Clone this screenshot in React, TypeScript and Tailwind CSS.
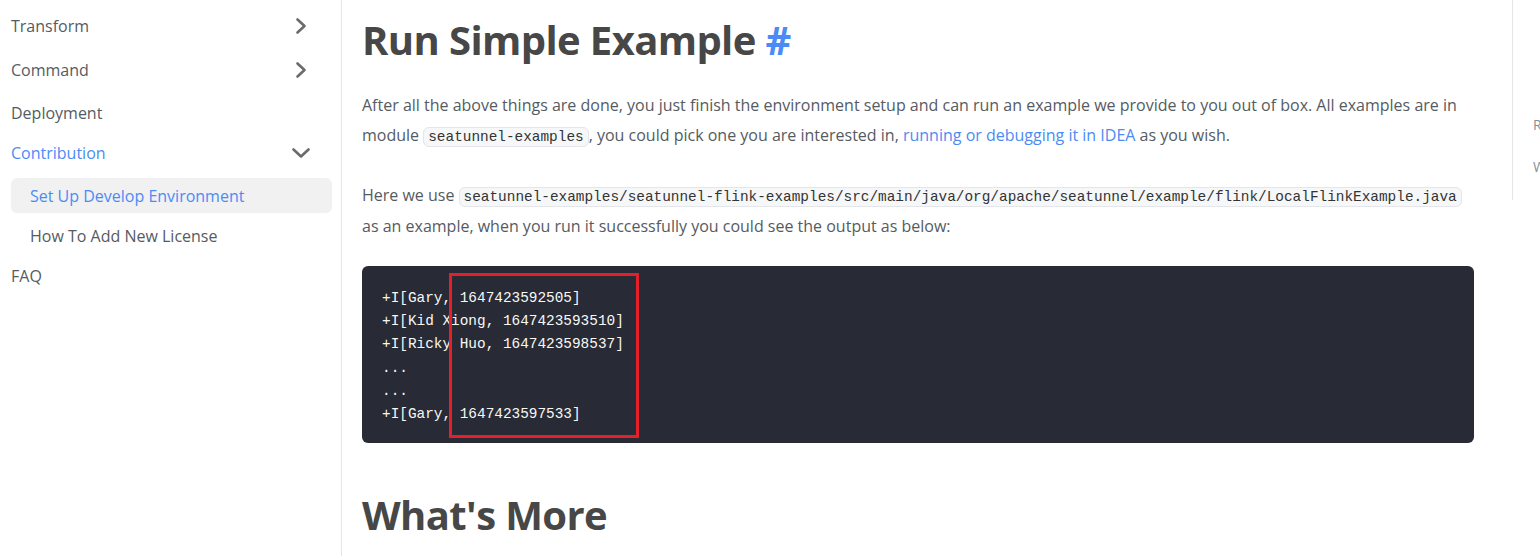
import React from 'react';

const sans = { fontFamily: '"Open Sans", "Noto Sans", sans-serif' };

const ChevronRight = () => (
  <svg width="12" height="18" viewBox="0 0 12 18" fill="none" stroke="#6b6b6b" strokeWidth="2.6" strokeLinecap="round" strokeLinejoin="round">
    <path d="M2.5 2.5 L9.5 9 L2.5 15.5" />
  </svg>
);

const ChevronDown = () => (
  <svg width="20" height="12" viewBox="0 0 20 12" fill="none" stroke="#6b6b6b" strokeWidth="2.6" strokeLinecap="round" strokeLinejoin="round">
    <path d="M2.5 2.5 L10 9.5 L17.5 2.5" />
  </svg>
);

const Sidebar: React.FC = () => (
  <aside className="w-[342px] shrink-0 border-r border-[#e3e5e8] pt-1 pl-[11px] pr-[9px] min-h-[556px]">
    <div className="h-[44px] flex items-center justify-between text-[16px] text-[#555b62]">
      <span>Transform</span>
      <span className="w-5 mr-[21px] flex justify-center"><ChevronRight /></span>
    </div>
    <div className="h-[44px] flex items-center justify-between text-[16px] text-[#555b62]">
      <span>Command</span>
      <span className="w-5 mr-[21px] flex justify-center"><ChevronRight /></span>
    </div>
    <div className="h-[41px] flex items-center text-[16px] text-[#555b62]">Deployment</div>
    <div className="h-[40px] flex items-center justify-between text-[16px] text-[#4c8bf5]">
      <span>Contribution</span>
      <span className="w-5 mr-[21px] flex justify-center"><ChevronDown /></span>
    </div>
    <div className="mt-[5px] h-[35px] flex items-center pl-[19px] rounded-md bg-[#f1f1f1] text-[16px] text-[#4c8bf5]">
      Set Up Develop Environment
    </div>
    <div className="mt-[3px] h-[40px] flex items-center pl-[19px] text-[16px] text-[#555b62]">How To Add New License</div>
    <div className="h-[40px] flex items-center text-[16px] text-[#555b62]">FAQ</div>
  </aside>
);

const Code: React.FC<{ children: React.ReactNode }> = ({ children }) => (
  <code className="font-['Liberation_Mono','DejaVu_Sans_Mono',monospace] text-[14.4px] leading-[22px] text-[#333] bg-[#f6f7f8] border border-[#e4e6e9] rounded-md px-[4px] py-px">
    {children}
  </code>
);

const lines = [
  '+I[Gary, 1647423592505]',
  '+I[Kid Xiong, 1647423593510]',
  '+I[Ricky Huo, 1647423598537]',
  '...',
  '...',
  '+I[Gary, 1647423597533]',
];

export default function App() {
  return (
    <div className="flex w-[1540px] h-[556px] overflow-hidden bg-white" style={sans}>
      <Sidebar />
      <main className="w-[1132px] shrink-0 pl-5">
        <h1 className="pt-4 text-[40px] leading-[48px] font-bold tracking-[-0.6px] text-[#474747]">
          Run Simple Example <span className="text-[#4c8bf5]">#</span>
        </h1>
        <p className="mt-[26px] text-[16px] leading-[30px] text-[#555b62]">
          After all the above things are done, you just finish the environment setup and can run an example we provide to you out of box. All examples are in module <Code>seatunnel-examples</Code>, you could pick one you are interested in, <span className="text-[#4c8bf5]">running or debugging it in IDEA</span> as you wish.
        </p>
        <p className="mt-[30px] text-[16px] leading-[31px] text-[#555b62]">
          Here we use <Code>seatunnel-examples/seatunnel-flink-examples/src/main/java/org/apache/seatunnel/example/flink/LocalFlinkExample.java</Code> as an example, when you run it successfully you could see the output as below:
        </p>
        <div className="relative mt-[24px] h-[177px] rounded-md bg-[#282a36] px-5 pt-[21px] pb-[17px]">
          <pre className="font-['Liberation_Mono','DejaVu_Sans_Mono',monospace] text-[14.4px] leading-[23.2px] text-[#f8f8f2]">
            {lines.join('\n')}
          </pre>
          <div className="absolute left-[87px] top-[7px] w-[190px] h-[165px] border-[3px] border-[#e5202b]" />
        </div>
        <h2 className="mt-[48px] text-[40px] leading-[48px] font-bold tracking-[-0.6px] text-[#474747]">What's More</h2>
      </main>
      <aside className="ml-[38px] h-[200px] flex-1 overflow-hidden whitespace-nowrap border-l border-[#e3e5e8] pl-5 pt-[114px] text-[14px] text-[#8a8f96]">
        <div className="h-[42px]">Run Simple Example</div>
        <div>What's More</div>
      </aside>
    </div>
  );
}
